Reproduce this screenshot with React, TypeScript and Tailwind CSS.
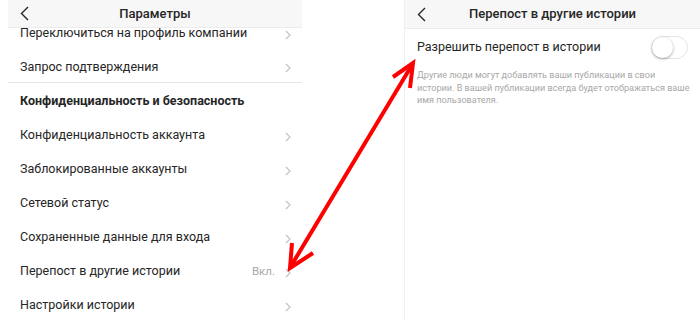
const rows = [
  { label: "Переключиться на профиль компании" },
  { label: "Запрос подтверждения", divider: true },
  { label: "Конфиденциальность и безопасность", bold: true },
  { label: "Конфиденциальность аккаунта" },
  { label: "Заблокированные аккаунты" },
  { label: "Сетевой статус" },
  { label: "Сохраненные данные для входа" },
  { label: "Перепост в другие истории", value: "Вкл." },
  { label: "Настройки истории" },
];

function Chevron() {
  return (
    <svg width="6" height="10" viewBox="0 0 6 10" className="shrink-0 mt-[2px]">
      <polyline points="1,1 5,5 1,9" fill="none" stroke="#c4c4c4" strokeWidth="1.2" />
    </svg>
  );
}

function Back() {
  return (
    <svg width="9" height="15" viewBox="0 0 9 15">
      <polyline points="8,1 1.5,7.5 8,14" fill="none" stroke="#262626" strokeWidth="1.4" />
    </svg>
  );
}

function Header({ title }: { title: string }) {
  return (
    <div className="relative z-10 flex h-[29px] items-center bg-[#f7f7f7] px-3 border-b border-[#ececec]">
      <Back />
      <div className="flex-1 text-center text-[13px] font-medium text-[#262626] pr-[9px]">{title}</div>
    </div>
  );
}

export default function App() {
  return (
    <div
      className="relative flex h-[321px] w-[700px] overflow-hidden bg-white text-[#262626]"
      style={{ fontFamily: '"Roboto", "Liberation Sans", sans-serif' }}
    >
      {/* левый экран */}
      <div className="ml-2 w-[294px] flex flex-col">
        <Header title="Параметры" />
        <div className="-mt-[13px]">
          {rows.map((r) => (
            <div
              key={r.label}
              className={`flex h-[34px] items-center pl-3 pr-[11px] pt-[3px] ${r.divider ? "border-b border-[#e6e6e6]" : ""}`}
            >
              <span className={`flex-1 text-[12.5px] ${r.bold ? "font-bold" : ""}`}>{r.label}</span>
              {r.value && <span className="mr-[10px] text-[11.5px] text-[#a8a8a8]">{r.value}</span>}
              {!r.bold && <Chevron />}
            </div>
          ))}
        </div>
      </div>

      {/* правый экран */}
      <div className="ml-auto w-[296px] flex flex-col border-l border-[#f0f0f0]">
        <Header title="Перепост в другие истории" />
        <div className="flex h-[37px] items-center pl-3 pr-3">
          <span className="flex-1 text-[12.5px]">Разрешить перепост в истории</span>
          <div className="flex h-[23px] w-[37px] items-center rounded-full border border-[#e4e4e4] bg-white">
            <div className="h-[21px] w-[21px] rounded-full bg-white shadow-[0_1px_3px_rgba(0,0,0,0.35)]" />
          </div>
        </div>
        <p className="mt-[3px] pl-3 whitespace-nowrap text-[9.1px] leading-[12.5px] text-[#a8a8a8]">
          Другие люди могут добавлять ваши публикации в свои
          <br />
          истории. В вашей публикации всегда будет отображаться ваше
          <br />
          имя пользователя.
        </p>
      </div>

      {/* красная стрелка */}
      <svg className="pointer-events-none absolute inset-0" width="700" height="321">
        <g stroke="#ff0000" strokeWidth="4" fill="none" strokeLinecap="butt">
          <line x1="291" y1="266" x2="412" y2="65" />
          <polyline points="393,77 413,63 410,88" />
          <polyline points="292,243 290,268 313,253" />
        </g>
      </svg>
    </div>
  );
}
